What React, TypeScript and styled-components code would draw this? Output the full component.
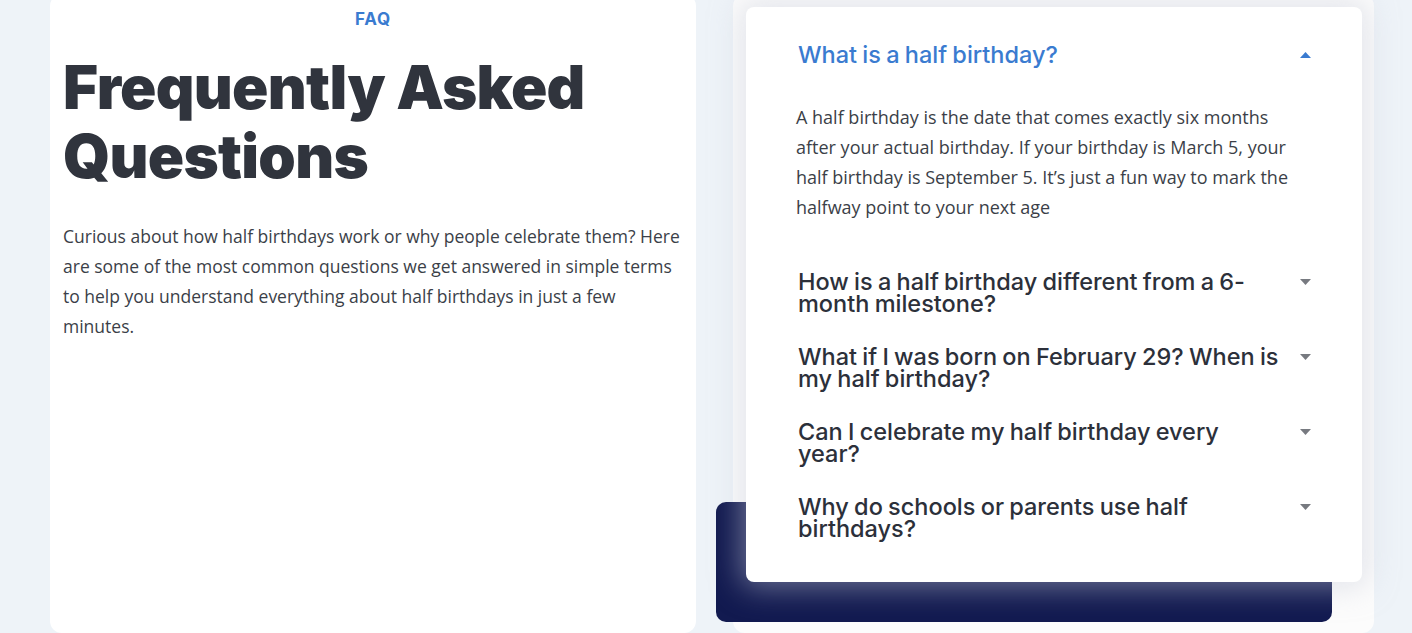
import styled, { createGlobalStyle } from "styled-components";

const GlobalStyle = createGlobalStyle`
  html, body {
    margin: 0;
    padding: 0;
    background: #eef3f8;
  }
  * {
    box-sizing: border-box;
  }
`;

const faqs = [
  {
    q: "What is a half birthday?",
    a: "A half birthday is the date that comes exactly six months after your actual birthday. If your birthday is March 5, your half birthday is September 5. It\u2019s just a fun way to mark the halfway point to your next age",
    open: true,
  },
  { q: "How is a half birthday different from a 6-month milestone?" },
  { q: "What if I was born on February 29? When is my half birthday?" },
  { q: "Can I celebrate my half birthday every year?" },
  { q: "Why do schools or parents use half birthdays?" },
];

const Caret = ({ open }: { open?: boolean }) => (
  <CaretIcon width="11" height="6" viewBox="0 0 11 6" $open={open}>
    {open ? <path d="M0 6 L5.5 0 L11 6 Z" /> : <path d="M0 0 L11 0 L5.5 6 Z" />}
  </CaretIcon>
);

const App = () => {
  return (
    <>
      <GlobalStyle />
      <Page>
        <Section>
          <IntroCard>
            <Eyebrow>FAQ</Eyebrow>
            <Title>Frequently Asked Questions</Title>
            <Lead>
              Curious about how half birthdays work or why people celebrate
              them? Here are some of the most common questions we get answered
              in simple terms to help you understand everything about half
              birthdays in just a few minutes.
            </Lead>
          </IntroCard>
          <AccordionCard>
            <Backdrop />
            <Accordion>
              {faqs.map((item) => (
                <Item key={item.q}>
                  <Question $open={item.open}>
                    <QuestionText>{item.q}</QuestionText>
                    <Caret open={item.open} />
                  </Question>
                  {item.a && <Answer>{item.a}</Answer>}
                </Item>
              ))}
            </Accordion>
          </AccordionCard>
        </Section>
      </Page>
    </>
  );
};

export default App;

const Page = styled.div`
  height: 633px;
  overflow: hidden;
`;

const Section = styled.div`
  display: flex;
  gap: 37px;
  height: 639px;
  margin-top: -6px;
  padding-left: 50px;
`;

const IntroCard = styled.div`
  width: 646px;
  background: #ffffff;
  border-radius: 12px;
  padding: 13px 13px 0;
`;

const Eyebrow = styled.div`
  font-family: Inter, "Liberation Sans", sans-serif;
  font-weight: 700;
  font-size: 17px;
  letter-spacing: 0.8px;
  color: #3a7bd0;
  text-align: center;
  line-height: 24px;
`;

const Title = styled.h1`
  margin: 22px 0 0;
  font-family: Inter, "Liberation Sans", sans-serif;
  font-weight: 900;
  font-size: 60px;
  line-height: 69px;
  letter-spacing: -0.7px;
  color: #30343d;
  max-width: 580px;
`;

const Lead = styled.p`
  margin: 30px 0 0;
  width: 622px;
  font-family: "Open Sans", sans-serif;
  font-size: 17.5px;
  line-height: 30px;
  color: #3b3f48;
`;

const AccordionCard = styled.div`
  position: relative;
  width: 641px;
  background: #fcfcfc;
  border-radius: 12px;
  padding: 13px 12px 0 13px;
`;

const Backdrop = styled.div`
  position: absolute;
  left: -17px;
  top: 508px;
  width: 616px;
  height: 120px;
  border-radius: 10px;
  background: #121a50;
`;

const Accordion = styled.div`
  position: relative;
  display: flex;
  flex-direction: column;
  gap: 31px;
  background: #ffffff;
  border-radius: 8px;
  padding: 37px 51px 42px 52px;
  box-shadow: 0 0 30px 5px rgba(200, 204, 218, 0.5);
`;

const Item = styled.div`
  display: flex;
  flex-direction: column;
`;

const Question = styled.div<{ $open?: boolean }>`
  display: flex;
  align-items: flex-start;
  justify-content: space-between;
  color: ${(p) => (p.$open ? "#3a7bd0" : "#2c303a")};
  cursor: pointer;
`;

const QuestionText = styled.div`
  width: 484px;
  font-family: Inter, "Liberation Sans", sans-serif;
  font-weight: 500;
  font-size: 23.5px;
  line-height: 22px;
  word-spacing: -1px;
`;

const CaretIcon = styled.svg<{ $open?: boolean }>`
  flex: none;
  margin-top: 8px;
  fill: ${(p) => (p.$open ? "#3a7bd0" : "#777a80")};
`;

const Answer = styled.div`
  margin-left: -2px;
  padding: 36px 0 18px;
  width: 505px;
  font-family: "Open Sans", sans-serif;
  font-size: 18px;
  line-height: 30px;
  color: #3b3f48;
`;
